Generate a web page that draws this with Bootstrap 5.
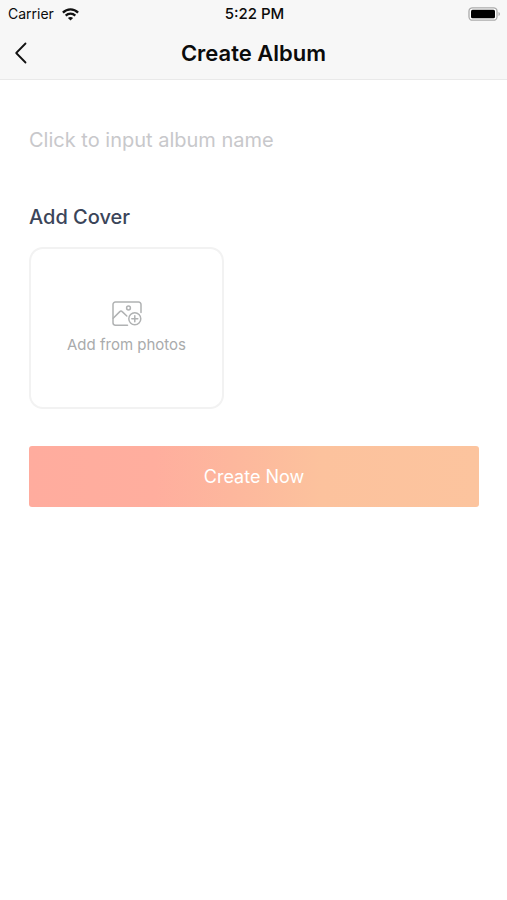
<!DOCTYPE html>
<html lang="en">
<head>
<meta charset="utf-8">
<meta name="viewport" content="width=device-width, initial-scale=1">
<title>Create Album</title>
<link href="https://cdn.jsdelivr.net/npm/bootstrap@5.3.0/dist/css/bootstrap.min.css" rel="stylesheet">
<style>
body { font-family: Inter, "Liberation Sans", sans-serif; background: #fff; color: #0b0b0b; }
svg { display: block; }
.top-area { background: #f7f7f7; border-bottom: 1px solid #e9e9e9; }
.status-line { height: 28px; padding: 0 6px 0 8px; font-size: 14px; line-height: 28px; }
.status-time { font-size: 15px; font-weight: 500; }
.title-bar { display: grid; grid-template-columns: 44px 1fr 44px; height: 51px; padding-bottom: 2px; }
.back-btn { padding: 0 0 0 14px; }
.screen-title { font-size: 22px; line-height: 28px; font-weight: 600; }
.form-area { padding: 44px 28px 0 29px; }
.name-input { font-size: 20px; line-height: 32px; }
.name-input::placeholder { color: #c8c8cb; opacity: 1; }
.cover-label { margin-top: 45px; font-size: 20px; line-height: 32px; color: #3b4559; }
.cover-btn { width: 195px; height: 162px; margin-top: 14px; border: 2px solid #f2f2f2; border-radius: 14px; font-size: 15px; line-height: 20px; color: #a9abac; background: #fff; }
.cover-icon { margin-bottom: 8px; }
.create-btn { height: 61px; margin-top: 37px; border: 0; border-radius: 3px; font-size: 18px; color: #fff; background: linear-gradient(90deg, #ffac9e 0%, #ffae9e 28%, #fdb79d 45%, #fcc29d 65%, #fcc49e 100%); }
.create-btn:hover { color: #fff; }
</style>
<script src="https://cdn.jsdelivr.net/npm/bootstrap@5.3.0/dist/js/bootstrap.bundle.min.js" defer></script>
</head>
<body>
<header class="top-area">
  <div class="status-line row g-0 align-items-center">
    <div class="col d-flex align-items-center gap-2">
      <span>Carrier</span>
      <svg width="17" height="13" viewBox="0 0 17 13" fill="none" stroke="#111" stroke-width="2.3" aria-hidden="true">
        <path d="M.9 4.6C5.2.3 11.8.3 16.1 4.6"/>
        <path d="M3.7 7.6c2.7-2.6 6.9-2.6 9.6 0"/>
        <path d="M8.5 12.6 5.9 10c1.4-1.3 3.8-1.3 5.2 0z" fill="#111" stroke="none"/>
      </svg>
    </div>
    <div class="col-auto status-time">5:22 PM</div>
    <div class="col d-flex justify-content-end">
      <svg width="33" height="14" viewBox="0 0 33 14" aria-hidden="true">
        <rect x="1" y=".8" width="28" height="12.4" rx="3.5" fill="#fff" stroke="#aaa" stroke-width="1.3"/>
        <rect x="3" y="2.8" width="24" height="8.4" rx="1.5" fill="#000"/>
        <path d="M30.5 5c2 .7 2 3.3 0 4z" fill="#aaa"/>
      </svg>
    </div>
  </div>
  <div class="title-bar align-items-center">
    <button type="button" class="btn border-0 back-btn" aria-label="Back">
      <svg width="14" height="22" viewBox="0 0 14 22" fill="none" stroke="#111" stroke-width="1.8" stroke-linecap="round" stroke-linejoin="round" aria-hidden="true"><path d="M11.5 1.5 2.2 11l9.3 9.5"/></svg>
    </button>
    <h1 class="screen-title text-center m-0">Create Album</h1>
  </div>
</header>
<main class="form-area">
  <form>
    <input type="text" class="form-control border-0 rounded-0 p-0 shadow-none name-input" placeholder="Click to input album name" aria-label="Album name">
    <h2 class="cover-label mb-0" id="cover-label">Add Cover</h2>
    <button type="button" class="cover-btn d-flex flex-column align-items-center justify-content-center p-0" aria-describedby="cover-label">
      <svg class="cover-icon" width="30" height="26" viewBox="0 0 30 26" fill="none" stroke="#b0b2b3" stroke-width="1.5" stroke-linecap="round" stroke-linejoin="round" aria-hidden="true">
        <path d="M15.5 24.2H3.4A2.4 2.4 0 0 1 1 21.800V3.400A2.400 2.400 0 0 1 3.400 1h23.200A2.400 2.400 0 0 1 29 3.400v8"/>
        <path d="m1.200 17.300 6.600-6.700c.8-.8 1.600-.8 2.400 0l4.600 4.400"/>
        <circle cx="16.500" cy="7" r="1.900"/>
        <circle cx="22.800" cy="17.800" r="6"/>
        <path d="M22.800 14.800v6M19.800 17.800h6"/>
      </svg>
      <span>Add from photos</span>
    </button>
    <button type="submit" class="btn create-btn w-100">Create Now</button>
  </form>
</main>
</body>
</html>
